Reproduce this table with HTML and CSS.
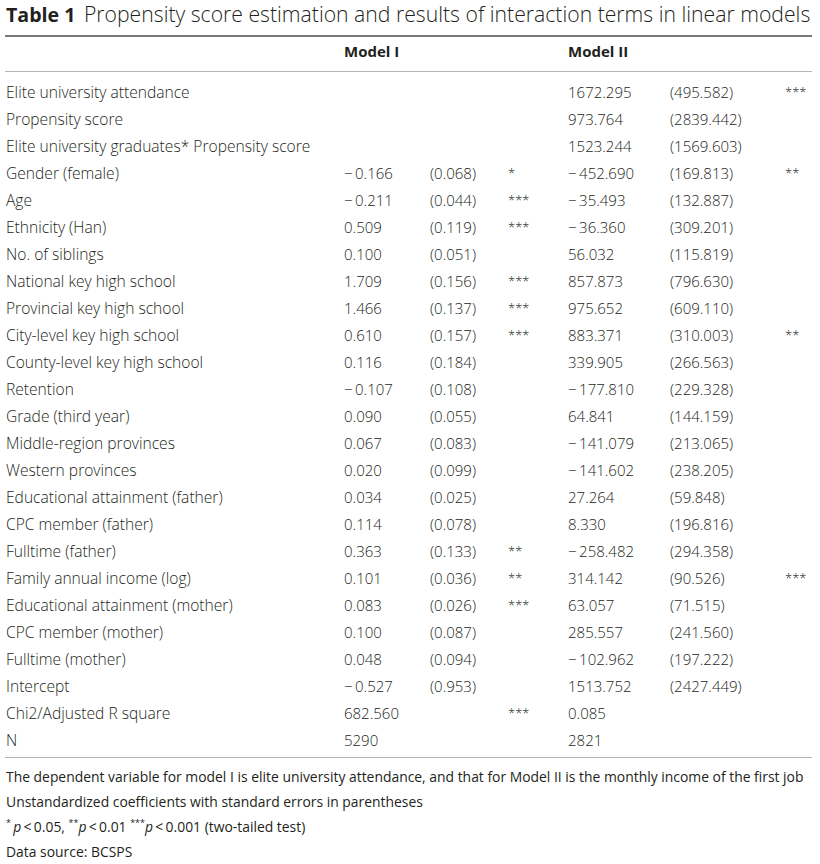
FILE: index.html
```html
<!DOCTYPE html>
<html lang="en">
<head>
  <meta charset="UTF-8">
  <title>Table 1</title>
  <link rel="stylesheet" href="styles.css">
</head>
<body>

<div class="table-wrap">
  <div class="caption"><span class="caption-label">Table 1</span> Propensity score estimation and results of interaction terms in linear models</div>

  <table class="results">
    <colgroup>
      <col class="c-label">
      <col class="c-coef1">
      <col class="c-se1">
      <col class="c-star1">
      <col class="c-coef2">
      <col class="c-se2">
      <col class="c-star2">
    </colgroup>
    <thead>
      <tr>
        <th></th>
        <th colspan="3">Model I</th>
        <th colspan="3">Model II</th>
      </tr>
    </thead>
    <tbody>
      <tr><td>Elite university attendance</td><td></td><td></td><td></td><td>1672.295</td><td>(495.582)</td><td class="star">***</td></tr>
      <tr><td>Propensity score</td><td></td><td></td><td></td><td>973.764</td><td>(2839.442)</td><td></td></tr>
      <tr><td>Elite university graduates* Propensity score</td><td></td><td></td><td></td><td>1523.244</td><td>(1569.603)</td><td></td></tr>
      <tr><td>Gender (female)</td><td>&minus;&#8201;0.166</td><td>(0.068)</td><td class="star">*</td><td>&minus;&#8201;452.690</td><td>(169.813)</td><td class="star">**</td></tr>
      <tr><td>Age</td><td>&minus;&#8201;0.211</td><td>(0.044)</td><td class="star">***</td><td>&minus;&#8201;35.493</td><td>(132.887)</td><td></td></tr>
      <tr><td>Ethnicity (Han)</td><td>0.509</td><td>(0.119)</td><td class="star">***</td><td>&minus;&#8201;36.360</td><td>(309.201)</td><td></td></tr>
      <tr><td>No. of siblings</td><td>0.100</td><td>(0.051)</td><td></td><td>56.032</td><td>(115.819)</td><td></td></tr>
      <tr><td>National key high school</td><td>1.709</td><td>(0.156)</td><td class="star">***</td><td>857.873</td><td>(796.630)</td><td></td></tr>
      <tr><td>Provincial key high school</td><td>1.466</td><td>(0.137)</td><td class="star">***</td><td>975.652</td><td>(609.110)</td><td></td></tr>
      <tr><td>City-level key high school</td><td>0.610</td><td>(0.157)</td><td class="star">***</td><td>883.371</td><td>(310.003)</td><td class="star">**</td></tr>
      <tr><td>County-level key high school</td><td>0.116</td><td>(0.184)</td><td></td><td>339.905</td><td>(266.563)</td><td></td></tr>
      <tr><td>Retention</td><td>&minus;&#8201;0.107</td><td>(0.108)</td><td></td><td>&minus;&#8201;177.810</td><td>(229.328)</td><td></td></tr>
      <tr><td>Grade (third year)</td><td>0.090</td><td>(0.055)</td><td></td><td>64.841</td><td>(144.159)</td><td></td></tr>
      <tr><td>Middle-region provinces</td><td>0.067</td><td>(0.083)</td><td></td><td>&minus;&#8201;141.079</td><td>(213.065)</td><td></td></tr>
      <tr><td>Western provinces</td><td>0.020</td><td>(0.099)</td><td></td><td>&minus;&#8201;141.602</td><td>(238.205)</td><td></td></tr>
      <tr><td>Educational attainment (father)</td><td>0.034</td><td>(0.025)</td><td></td><td>27.264</td><td>(59.848)</td><td></td></tr>
      <tr><td>CPC member (father)</td><td>0.114</td><td>(0.078)</td><td></td><td>8.330</td><td>(196.816)</td><td></td></tr>
      <tr><td>Fulltime (father)</td><td>0.363</td><td>(0.133)</td><td class="star">**</td><td>&minus;&#8201;258.482</td><td>(294.358)</td><td></td></tr>
      <tr><td>Family annual income (log)</td><td>0.101</td><td>(0.036)</td><td class="star">**</td><td>314.142</td><td>(90.526)</td><td class="star">***</td></tr>
      <tr><td>Educational attainment (mother)</td><td>0.083</td><td>(0.026)</td><td class="star">***</td><td>63.057</td><td>(71.515)</td><td></td></tr>
      <tr><td>CPC member (mother)</td><td>0.100</td><td>(0.087)</td><td></td><td>285.557</td><td>(241.560)</td><td></td></tr>
      <tr><td>Fulltime (mother)</td><td>0.048</td><td>(0.094)</td><td></td><td>&minus;&#8201;102.962</td><td>(197.222)</td><td></td></tr>
      <tr><td>Intercept</td><td>&minus;&#8201;0.527</td><td>(0.953)</td><td></td><td>1513.752</td><td>(2427.449)</td><td></td></tr>
      <tr><td>Chi2/Adjusted R square</td><td>682.560</td><td></td><td class="star">***</td><td>0.085</td><td></td><td></td></tr>
      <tr><td>N</td><td>5290</td><td></td><td></td><td>2821</td><td></td><td></td></tr>
    </tbody>
  </table>

  <div class="notes">
    <p>The dependent variable for model I is elite university attendance, and that for Model II is the monthly income of the first job</p>
    <p>Unstandardized coefficients with standard errors in parentheses</p>
    <p><sup>*</sup>&#8201;<i>p</i>&#8201;&lt;&#8201;0.05, <sup>**</sup><i>p</i>&#8201;&lt;&#8201;0.01 <sup>***</sup><i>p</i>&#8201;&lt;&#8201;0.001 (two-tailed test)</p>
    <p>Data source: BCSPS</p>
  </div>
</div>

</body>
</html>
```

FILE: styles.css
```css
body {
  margin: 0;
  background: #fff;
  color: #231f20;
  font-family: 'Open Sans', 'Liberation Sans', sans-serif;
}

.table-wrap {
  padding: 2px 8px 0 5px;
}

.caption {
  font-size: 21.2px;
  font-weight: 300;
  line-height: 24px;
  padding-left: 1px;
  margin-bottom: 8px;
  white-space: nowrap;
}

.caption-label {
  font-size: 19.6px;
  font-weight: 700;
  margin-right: 3px;
}

.results {
  width: 807px;
  border-collapse: collapse;
  table-layout: fixed;
  font-size: 15px;
  font-weight: 300;
  border-top: 2px solid #7a7a7a;
  border-bottom: 1px solid #b5b5b5;
}

.c-label { width: 339px; }
.c-coef1 { width: 86px; }
.c-se1 { width: 78px; }
.c-star1 { width: 60px; }
.c-coef2 { width: 102px; }
.c-se2 { width: 115px; }
.c-star2 { width: 27px; }

.results thead th {
  text-align: left;
  font-weight: 700;
  height: 28px;
  padding: 0 0 6px;
  border-bottom: 1px solid #b5b5b5;
}

.results td {
  padding: 0;
  height: 27px;
  white-space: nowrap;
}

.results tbody tr:first-child td {
  padding-top: 6px;
}

.results tbody tr:last-child td {
  padding-bottom: 4px;
}

.results td:first-child {
  padding-left: 1px;
  font-size: 15.6px;
}

.results td.star {
  font-size: 13px;
}

.notes {
  font-size: 13.9px;
  line-height: 25px;
  padding: 6px 0 0 1px;
}

.notes p {
  margin: 0;
  white-space: nowrap;
}

.notes sup {
  font-size: 9px;
  line-height: 0;
}
```
